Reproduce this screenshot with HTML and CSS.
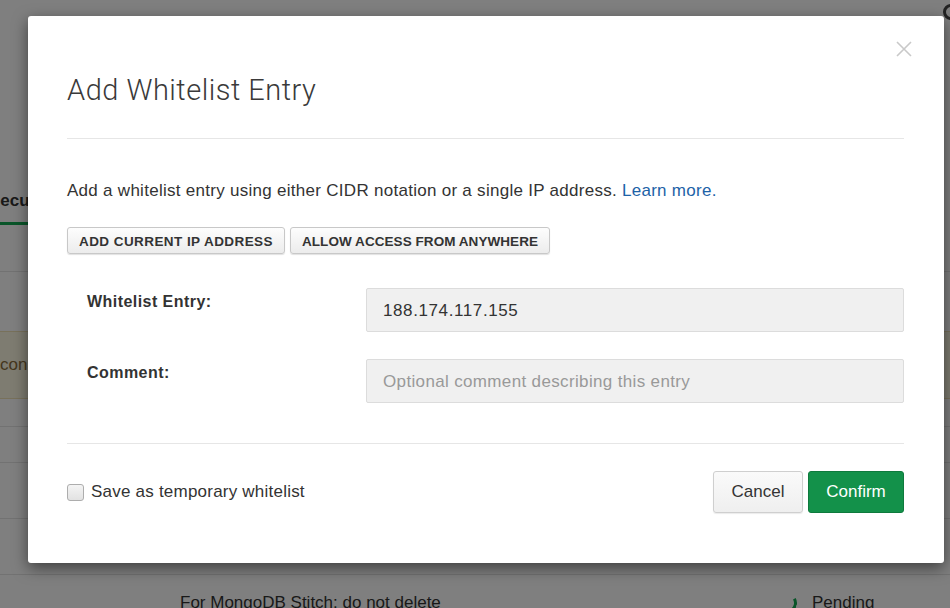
FILE: index.html
```html
<!DOCTYPE html>
<html>
<head>
<meta charset="utf-8">
<link rel="stylesheet" href="styles.css">
</head>
<body>
<div class="page">
  <div class="topbar"><span class="top-icon"></span></div>
  <div class="tabs"><span class="tab active">Security</span></div>
  <div class="row row-a"></div>
  <div class="row row-b"></div>
  <div class="row row-warn">connect</div>
  <div class="row row-c"></div>
  <div class="row row-d"></div>
  <div class="row row-e"></div>
  <div class="row row-e"></div>
  <div class="row row-f">
    <span class="cell-comment">For MongoDB Stitch: do not delete</span>
    <span class="cell-status"><span class="spinner"></span>Pending</span>
  </div>
</div>

<div class="overlay"></div>

<div class="modal">
  <button class="close" aria-label="Close">
    <svg width="16" height="16" viewBox="0 0 16 16"><path d="M1 1 L15 15 M15 1 L1 15" stroke="#c9c9c9" stroke-width="1.6" fill="none"/></svg>
  </button>
  <h1 class="title">Add Whitelist Entry</h1>
  <hr class="divider">
  <p class="intro">Add a whitelist entry using either CIDR notation or a single IP address. <a href="#" class="link">Learn more.</a></p>
  <div class="quick">
    <button class="btn-small">ADD CURRENT IP ADDRESS</button>
    <button class="btn-small btn-wide">ALLOW ACCESS FROM ANYWHERE</button>
  </div>
  <div class="form">
    <label class="label">Whitelist Entry:</label>
    <input class="field field-value" type="text" value="188.174.117.155">
    <label class="label">Comment:</label>
    <input class="field" type="text" placeholder="Optional comment describing this entry">
  </div>
  <hr class="divider divider-bottom">
  <div class="footer">
    <label class="temp"><input type="checkbox" class="check"><span>Save as temporary whitelist</span></label>
    <div class="actions">
      <button class="btn btn-cancel">Cancel</button>
      <button class="btn btn-confirm">Confirm</button>
    </div>
  </div>
</div>
</body>
</html>
```
FILE: styles.css
```css
* { box-sizing: border-box; }
html, body { margin: 0; padding: 0; }
body {
  width: 950px;
  height: 608px;
  overflow: hidden;
  font-family: "Liberation Sans", Arial, sans-serif;
  color: #333;
  background: #fff;
  position: relative;
}

/* background page */
.page { width: 950px; }
.topbar {
  height: 30px;
  display: flex;
  justify-content: flex-end;
  padding-top: 4px;
}
.top-icon {
  width: 16px;
  height: 16px;
  border-radius: 50%;
  border: 3px solid #444;
  margin-right: -9px;
}
.tabs {
  margin-top: 159px;
  display: flex;
}
.tab {
  font-size: 17px;
  font-weight: bold;
  line-height: 24px;
  padding-bottom: 9px;
  color: #333;
}
.tab.active {
  margin-left: -11px;
  border-bottom: 3px solid #13aa52;
}
.row {
  border-bottom: 1px solid #e4e4e4;
  font-size: 17px;
  line-height: 24px;
}
.row-a { height: 47px; }
.row-b { height: 60px; }
.row-warn {
  height: 68px;
  background: #fcf8e3;
  border-top: 1px solid #f0e2b6;
  border-bottom: 1px solid #f0e2b6;
  color: #8a6d3b;
  padding-top: 21px;
  margin-top: -1px;
}
.row-c { height: 28px; }
.row-d { height: 36px; }
.row-e { height: 56px; }
.row-f {
  border-bottom: none;
  padding-top: 16px;
  padding-left: 180px;
  display: flex;
}
.cell-comment { width: 597px; color: #333; }
.cell-status { display: flex; align-items: flex-start; color: #333; }
.spinner {
  width: 20px;
  height: 20px;
  border-radius: 50%;
  border: 3px solid transparent;
  border-right-color: #13aa52;
  transform: rotate(15deg);
  margin-right: 15px;
  margin-top: 2px;
}

.overlay {
  position: absolute;
  inset: 0;
  background: rgba(0, 0, 0, 0.5);
}

/* modal */
.modal {
  position: absolute;
  left: 28px;
  top: 16px;
  width: 916px;
  height: 547px;
  background: #fff;
  border-radius: 3px;
  box-shadow: 0 5px 15px rgba(0, 0, 0, 0.5);
  padding: 56px 40px 0 39px;
}
.close {
  position: absolute;
  right: 32px;
  top: 25px;
  border: 0;
  background: none;
  padding: 0;
  width: 16px;
  height: 16px;
}
.close svg { display: block; }
.title {
  margin: 0;
  font-family: Roboto, "Liberation Sans", sans-serif;
  font-size: 29px;
  line-height: 36px;
  font-weight: 300;
  color: #3a3a3a;
  letter-spacing: 0.5px;
}
.divider {
  margin: 30px 0 0;
  border: 0;
  border-top: 1px solid #e6e6e6;
  height: 0;
}
.intro {
  margin: 40px 0 0;
  font-size: 17px;
  line-height: 24px;
  letter-spacing: 0.28px;
  color: #333;
}
.link { color: #1d62a7; text-decoration: none; }
.quick {
  margin-top: 24px;
  display: flex;
  gap: 5px;
}
.btn-small {
  height: 27px;
  padding: 1px 11px 0;
  font-family: "Liberation Sans", Arial, sans-serif;
  font-size: 13.5px;
  font-weight: bold;
  letter-spacing: 0.43px;
  color: #333;
  background: linear-gradient(#fdfdfd, #ececec);
  border: 1px solid #c8c8c8;
  border-radius: 3px;
  box-shadow: 0 1px 1px rgba(0, 0, 0, 0.12);
}
.btn-wide { letter-spacing: 0.06px; }
.form {
  margin-top: 34px;
  display: grid;
  grid-template-columns: 279px 538px;
  row-gap: 27px;
  padding-left: 20px;
}
.label {
  font-size: 16px;
  font-weight: bold;
  line-height: 24px;
  letter-spacing: 0.45px;
  padding-top: 2px;
  color: #333;
}
.field {
  height: 44px;
  width: 538px;
  background: #f0f0f0;
  border: 1px solid #dcdcdc;
  border-radius: 2px;
  padding: 2px 16px 0;
  font-family: "Liberation Sans", Arial, sans-serif;
  font-size: 17px;
  letter-spacing: 0.35px;
  color: #333;
  outline: none;
}
.field-value { letter-spacing: 0.6px; }
.field::placeholder { color: #999; }
.divider-bottom { margin-top: 40px; }
.footer {
  margin-top: 27px;
  display: flex;
  justify-content: space-between;
  align-items: center;
}
.temp {
  display: flex;
  align-items: center;
  gap: 7px;
  font-size: 17px;
  letter-spacing: 0.22px;
  color: #333;
}
.check {
  appearance: none;
  -webkit-appearance: none;
  margin: 0;
  width: 17px;
  height: 17px;
  border: 1px solid #adadad;
  border-radius: 3px;
  background: linear-gradient(#f4f4f4, #e2e2e2);
}
.actions { display: flex; gap: 5px; }
.btn {
  height: 42px;
  padding-top: 1px;
  font-family: "Liberation Sans", Arial, sans-serif;
  font-size: 17px;
  border-radius: 3px;
}
.btn-cancel {
  width: 90px;
  color: #333;
  background: linear-gradient(#fafafa, #efefef);
  border: 1px solid #cfcfcf;
  box-shadow: 0 1px 1px rgba(0, 0, 0, 0.08);
}
.btn-confirm {
  width: 96px;
  color: #fff;
  background: #13914a;
  border: 1px solid #0e7a3d;
}
```
